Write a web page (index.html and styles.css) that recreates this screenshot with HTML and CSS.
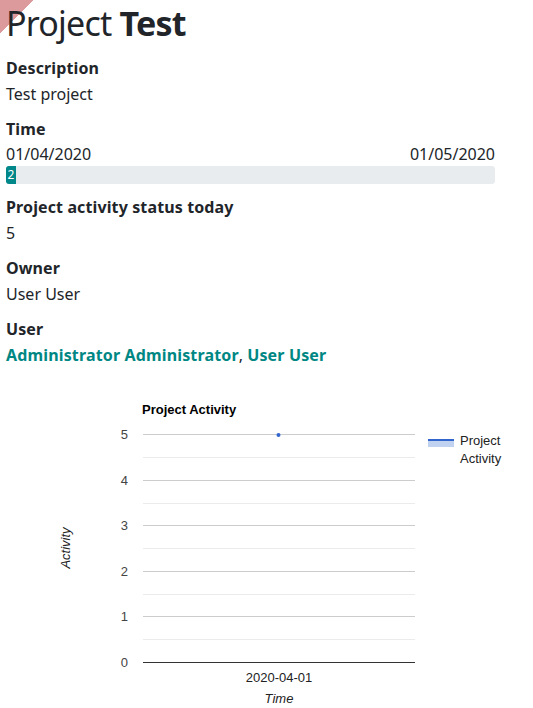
FILE: index.html
```html
<!DOCTYPE html>
<html>
<head>
<meta charset="utf-8">
<link rel="stylesheet" href="styles.css">
</head>
<body>
<div class="ribbon"></div>
<main class="page">
  <h1 class="title">Project <b>Test</b></h1>
  <section class="field">
    <div class="label">Description</div>
    <div class="value">Test project</div>
  </section>
  <section class="field">
    <div class="label">Time</div>
    <div class="dates"><span>01/04/2020</span><span>01/05/2020</span></div>
    <div class="progress"><div class="progress-bar" style="width: 10px">2</div></div>
  </section>
  <section class="field">
    <div class="label">Project activity status today</div>
    <div class="value">5</div>
  </section>
  <section class="field">
    <div class="label">Owner</div>
    <div class="value">User User</div>
  </section>
  <section class="field last">
    <div class="label">User</div>
    <div class="value"><a class="link" href="#">Administrator Administrator</a>, <a class="link" href="#">User User</a></div>
  </section>
  <svg class="chart" width="527" height="340" viewBox="0 0 527 340">
    <g transform="translate(-6,-367)">
      <text x="142" y="414" class="c-title">Project Activity</text>
      <g class="minor">
        <line x1="143" x2="415" y1="457.5" y2="457.5"/>
        <line x1="143" x2="415" y1="503.5" y2="503.5"/>
        <line x1="143" x2="415" y1="548.5" y2="548.5"/>
        <line x1="143" x2="415" y1="594.5" y2="594.5"/>
        <line x1="143" x2="415" y1="639.5" y2="639.5"/>
      </g>
      <g class="major">
        <line x1="143" x2="415" y1="434.5" y2="434.5"/>
        <line x1="143" x2="415" y1="480.5" y2="480.5"/>
        <line x1="143" x2="415" y1="525.5" y2="525.5"/>
        <line x1="143" x2="415" y1="571.5" y2="571.5"/>
        <line x1="143" x2="415" y1="616.5" y2="616.5"/>
      </g>
      <line class="base" x1="143" x2="415" y1="662.5" y2="662.5"/>
      <g class="ylab">
        <text x="128" y="439">5</text>
        <text x="128" y="485">4</text>
        <text x="128" y="530">3</text>
        <text x="128" y="576">2</text>
        <text x="128" y="621">1</text>
        <text x="128" y="667">0</text>
      </g>
      <circle cx="278.5" cy="435" r="2" class="dot"/>
      <text x="279" y="682" class="xlab">2020-04-01</text>
      <text x="279" y="703" class="axis-title" text-anchor="middle">Time</text>
      <text transform="translate(70,548) rotate(-90)" class="axis-title" text-anchor="middle">Activity</text>
      <rect x="428" y="441" width="26" height="6" class="leg-fill"/>
      <line x1="428" x2="454" y1="440" y2="440" class="leg-line"/>
      <text x="460" y="445" class="leg-text">Project</text>
      <text x="460" y="463" class="leg-text">Activity</text>
    </g>
  </svg>
</main>
</body>
</html>
```
FILE: styles.css
```css
html, body {
  margin: 0;
  padding: 0;
  background: #fff;
}
body {
  font-family: "Noto Sans", "Open Sans", sans-serif;
  font-size: 16px;
  line-height: 24px;
  color: #212529;
  position: relative;
}
.ribbon {
  position: absolute;
  left: 0;
  top: 0;
  width: 34px;
  height: 34px;
  background: linear-gradient(135deg, #dc9a9c 50%, transparent 50%);
  z-index: 0;
}
.page {
  position: relative;
  z-index: 1;
  width: 489px;
  padding: 0 6px;
}
.title {
  margin: 0 0 11px 0;
  padding-top: 2px;
  font-size: 34px;
  line-height: 43px;
  font-weight: 400;
  letter-spacing: -0.8px;
}
.title b {
  font-weight: 700;
}
.field {
  margin-bottom: 11px;
}
.field.last {
  margin-bottom: 0;
}
.label {
  font-weight: 700;
  line-height: 24px;
  margin-bottom: 2px;
  letter-spacing: 0.12px;
}
.value {
  line-height: 24px;
}
.dates {
  display: flex;
  justify-content: space-between;
  line-height: 23px;
}
.progress {
  display: flex;
  height: 18px;
  background: #e9ecef;
  border-radius: 3px;
  overflow: hidden;
}
.progress-bar {
  background: #00878a;
  color: #fff;
  font-size: 12px;
  line-height: 18px;
  text-align: center;
}
.link {
  color: #008784;
  font-weight: 700;
  text-decoration: none;
  letter-spacing: 0.15px;
}
.chart {
  display: block;
  font-family: "Liberation Sans", Arial, sans-serif;
}
.c-title {
  font-size: 13px;
  font-weight: 700;
  fill: #000;
}
.minor line {
  stroke: #ebebeb;
  stroke-width: 1;
}
.major line {
  stroke: #cccccc;
  stroke-width: 1;
}
.base {
  stroke: #333333;
  stroke-width: 1;
}
.ylab text {
  font-size: 13px;
  fill: #444;
  text-anchor: end;
}
.dot {
  fill: #3366cc;
}
.xlab {
  font-size: 13px;
  fill: #222;
  text-anchor: middle;
}
.axis-title {
  font-size: 13px;
  font-style: italic;
  fill: #222;
}
.leg-fill {
  fill: #3366cc;
  fill-opacity: 0.3;
}
.leg-line {
  stroke: #3366cc;
  stroke-width: 2;
}
.leg-text {
  font-size: 13px;
  fill: #222;
}
```
